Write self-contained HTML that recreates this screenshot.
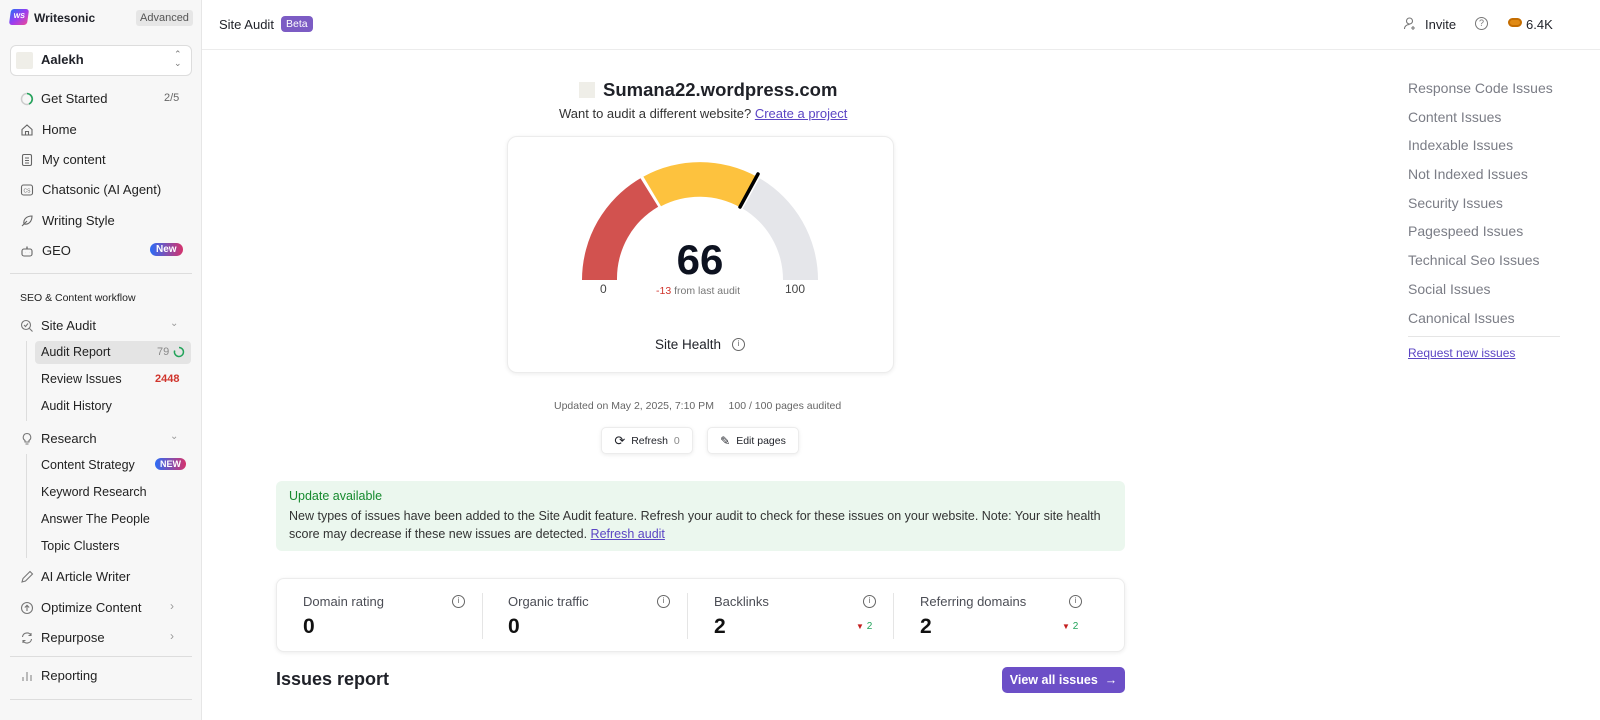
<!DOCTYPE html>
<html><head><meta charset="utf-8"><style>
*{box-sizing:border-box;margin:0;padding:0}
body{width:1600px;height:720px;overflow:hidden;font-family:"Liberation Sans",sans-serif;background:#fff;color:#1f2128;position:relative}
.a{position:absolute;white-space:nowrap}
#sb{position:absolute;left:0;top:0;width:202px;height:720px;background:#f7f7f7;border-right:1px solid #e6e6e6}
.ni{position:absolute;left:20px;font-size:13px;color:#222}
.ni svg{position:absolute;left:0;top:1px}
.ni span{position:absolute;left:21px;top:0;white-space:nowrap}
.sub{position:absolute;left:41px;font-size:12.5px;color:#222;white-space:nowrap}
.hr{position:absolute;left:10px;width:182px;height:1px;background:#ddd}
.ri{position:absolute;left:1408px;font-size:14px;color:#7b7d86;white-space:nowrap}
.card{position:absolute;background:#fff;border:1px solid #ececec;border-radius:8px;box-shadow:0 1px 4px rgba(0,0,0,.08)}
.btn{display:flex;align-items:center;justify-content:center;gap:6px;font-size:10.5px}
.st{position:absolute;top:0;width:206px;height:72px}
.st .l{position:absolute;left:26px;top:15px;font-size:13px;color:#4b4d55}
.st .v{position:absolute;left:26px;top:36px;font-size:21px;font-weight:bold;color:#111}
.st .i{position:absolute;right:18px;top:16px;width:13px;height:13px;border:1.3px solid #666;border-radius:50%;font-size:8px;text-align:center;line-height:10px;color:#666}
</style></head><body>
<div id="sb">
 <div class="a" style="left:10px;top:9px;width:18px;height:16px;background:linear-gradient(135deg,#2b6cf6,#9a3cf0,#e94a9a);border-radius:3px;transform:skewX(-8deg);color:#fff;font-size:7px;font-weight:bold;text-align:center;line-height:16px">WS</div>
 <div class="a" style="left:34px;top:11px;font-size:12px;font-weight:bold">Writesonic</div>
 <div class="a" style="left:136px;top:10px;background:#e6e6e6;border-radius:3px;padding:2px 4px;font-size:11px;color:#555">Advanced</div>
 <div class="a" style="left:10px;top:45px;width:182px;height:31px;background:#fff;border:1px solid #ddd;border-radius:6px"></div>
 <div class="a" style="left:16px;top:52px;width:17px;height:17px;background:#efeee8;border-radius:2px"></div>
 <div class="a" style="left:41px;top:52px;font-size:13px;font-weight:bold">Aalekh</div>
 <div class="a" style="left:174px;top:50px;font-size:9px;color:#777;line-height:9px">⌃<br>⌄</div>
 <div class="ni" style="top:91px"><svg width="14" height="14"><circle cx="7" cy="7" r="5.5" fill="none" stroke="#ccc" stroke-width="1.5"/><path d="M7 1.5A5.5 5.5 0 0 1 9 12" fill="none" stroke="#22a35a" stroke-width="1.6"/></svg><span>Get Started</span></div>
 <div class="a" style="left:164px;top:92px;font-size:11px;color:#666">2/5</div>
 <div class="ni" style="top:122px"><svg width="14" height="14"><path d="M2 6.5L7 2l5 4.5V12H2z M5.5 12V8.5h3V12" fill="none" stroke="#666" stroke-width="1.1"/></svg><span style="left:22px">Home</span></div>
 <div class="ni" style="top:152px"><svg width="14" height="14"><rect x="2.5" y="1.5" width="9" height="11" rx="1.5" fill="none" stroke="#666" stroke-width="1.1"/><path d="M5 5h4M5 7.5h4M5 10h4" stroke="#666"/></svg><span style="left:22px">My content</span></div>
 <div class="ni" style="top:182px"><svg width="14" height="14"><rect x="1.5" y="2" width="11" height="10" rx="2" fill="none" stroke="#666" stroke-width="1.1"/><text x="3.5" y="9.5" font-size="5" fill="#666" font-family="Liberation Sans">CS</text></svg><span style="left:22px">Chatsonic (AI Agent)</span></div>
 <div class="ni" style="top:213px"><svg width="14" height="14"><path d="M2 12L7 7M4 10C3 5 7 2 12 2 12 7 9 11 4 10" fill="none" stroke="#666" stroke-width="1.1"/></svg><span style="left:22px">Writing Style</span></div>
 <div class="ni" style="top:243px"><svg width="14" height="14"><rect x="2" y="5" width="10" height="7" rx="2" fill="none" stroke="#666" stroke-width="1.1"/><path d="M7 5V2.5M5 8.5h.1M9 8.5h.1" stroke="#666" stroke-width="1.3"/></svg><span style="left:22px">GEO</span></div>
 <div class="a" style="left:150px;top:243px;background:linear-gradient(90deg,#2b6cf6,#d6336c);color:#fff;font-size:10px;font-weight:bold;border-radius:8px;padding:1px 6px">New</div>
 <div class="hr" style="top:273px"></div>
 <div class="a" style="left:20px;top:292px;font-size:10.5px;color:#222">SEO &amp; Content workflow</div>
 <div class="ni" style="top:318px"><svg width="14" height="14"><circle cx="6" cy="6" r="4.5" fill="none" stroke="#777" stroke-width="1.1"/><path d="M9.5 9.5L12.5 12.5M4 6l1.5 1.5L8 4.5" fill="none" stroke="#777" stroke-width="1.1"/></svg><span>Site Audit</span></div>
 <div class="a" style="left:170px;top:318px;font-size:10px;color:#999">⌄</div>
 <div class="a" style="left:26px;top:341px;width:1px;height:80px;background:#ddd"></div>
 <div class="a" style="left:35px;top:341px;width:156px;height:23px;background:#e4e4e4;border-radius:4px"></div>
 <div class="sub" style="top:345px">Audit Report</div>
 <div class="a" style="left:157px;top:346px;font-size:11px;color:#888">79</div>
 <svg class="a" style="left:173px;top:346px" width="12" height="12"><path d="M6 1.5A4.5 4.5 0 1 1 1.7 4.5" fill="none" stroke="#22a35a" stroke-width="1.5"/></svg>
 <div class="sub" style="top:372px">Review Issues</div>
 <div class="a" style="left:155px;top:373px;font-size:11px;color:#d0342c;font-weight:bold">2448</div>
 <div class="sub" style="top:399px">Audit History</div>
 <div class="ni" style="top:431px"><svg width="14" height="14"><path d="M7 1.5a3.8 3.8 0 0 0-2 7V10h4V8.5a3.8 3.8 0 0 0-2-7zM5.5 12h3" fill="none" stroke="#777" stroke-width="1.1"/></svg><span>Research</span></div>
 <div class="a" style="left:170px;top:431px;font-size:10px;color:#999">⌄</div>
 <div class="a" style="left:26px;top:454px;width:1px;height:104px;background:#ddd"></div>
 <div class="sub" style="top:458px">Content Strategy</div>
 <div class="a" style="left:155px;top:458px;background:linear-gradient(90deg,#2b6cf6,#d6336c);color:#fff;font-size:9px;font-weight:bold;border-radius:7px;padding:1px 5px">NEW</div>
 <div class="sub" style="top:485px">Keyword Research</div>
 <div class="sub" style="top:512px">Answer The People</div>
 <div class="sub" style="top:539px">Topic Clusters</div>
 <div class="ni" style="top:569px"><svg width="14" height="14"><path d="M2 12l1-3.5L10 1.5l2.5 2.5L5.5 11z" fill="none" stroke="#777" stroke-width="1.1"/></svg><span>AI Article Writer</span></div>
 <div class="ni" style="top:600px"><svg width="14" height="14"><circle cx="7" cy="7" r="5.5" fill="none" stroke="#777" stroke-width="1.1"/><path d="M7 10V4.5M4.8 6.5L7 4.3l2.2 2.2" fill="none" stroke="#777" stroke-width="1.1"/></svg><span>Optimize Content</span></div>
 <div class="a" style="left:170px;top:599px;font-size:12px;color:#999">›</div>
 <div class="ni" style="top:630px"><svg width="14" height="14"><path d="M2.5 6a4.5 4.5 0 0 1 8.5-1.5M11.5 8a4.5 4.5 0 0 1-8.5 1.5M11 2v2.5H8.5M3 12V9.5h2.5" fill="none" stroke="#777" stroke-width="1.1"/></svg><span>Repurpose</span></div>
 <div class="a" style="left:170px;top:629px;font-size:12px;color:#999">›</div>
 <div class="hr" style="top:656px"></div>
 <div class="ni" style="top:668px"><svg width="14" height="14"><path d="M3 12V8M7 12V3M11 12V6" stroke="#888" stroke-width="1.1"/></svg><span>Reporting</span></div>
 <div class="hr" style="top:699px"></div>
</div>
<!-- header -->
<div class="a" style="left:202px;top:49px;width:1398px;height:1px;background:#ececec"></div>
<div class="a" style="left:219px;top:17px;font-size:13px">Site Audit</div>
<div class="a" style="left:281px;top:16px;background:#7c5cc4;color:#fff;font-size:10.5px;border-radius:4px;padding:2px 5px">Beta</div>
<svg class="a" style="left:1403px;top:16px" width="15" height="15"><circle cx="6.5" cy="5" r="3" fill="none" stroke="#777" stroke-width="1.1"/><path d="M1.5 13c0-3 2.5-4.5 5-4.5M10 10v4M8 12h4" fill="none" stroke="#777" stroke-width="1.1"/></svg>
<div class="a" style="left:1425px;top:17px;font-size:13px">Invite</div>
<div class="a" style="left:1475px;top:17px;width:13px;height:13px;border:1.2px solid #777;border-radius:50%;font-size:9px;color:#777;text-align:center;line-height:11px">?</div>
<div class="a" style="left:1508px;top:18px;width:14px;height:9px;background:#e08a14;border-radius:5px;border:2px solid #c46d00"></div>
<div class="a" style="left:1526px;top:17px;font-size:13px">6.4K</div>
<!-- title -->
<div class="a" style="left:579px;top:82px;width:16px;height:16px;background:#efeee8"></div>
<div class="a" style="left:603px;top:79px;font-size:18.5px;font-weight:bold">Sumana22.wordpress.com</div>
<div class="a" style="left:559px;top:106px;font-size:13px;color:#333">Want to audit a different website? <span style="color:#5b45c4;text-decoration:underline">Create a project</span></div>
<div class="card" style="left:507px;top:136px;width:387px;height:237px;border-radius:10px"></div>
<svg class="a" style="left:560px;top:150px" width="280" height="140" viewBox="560 150 280 140">
 <path d="M582 280A118 118 0 0 1 640.5 178.2L658.2 206.7A83 83 0 0 0 617 280Z" fill="#d2524f"/>
 <path d="M643.4 176.6A118 118 0 0 1 757.1 176.8L740.3 207.4A83 83 0 0 0 661 206.2Z" fill="#fdc23e"/>
 <path d="M759.6 178.2A118 118 0 0 1 818 280H783A83 83 0 0 0 742.8 208.6Z" fill="#e5e6ea"/>
 <path d="M740 207L758 174" stroke="#000" stroke-width="3.5" stroke-linecap="round"/>
</svg>
<div class="a" style="left:640px;top:236px;width:120px;text-align:center;font-size:42px;font-weight:bold;color:#0d1220">66</div>
<div class="a" style="left:600px;top:282px;font-size:12px;color:#444">0</div>
<div class="a" style="left:785px;top:282px;font-size:12px;color:#444">100</div>
<div class="a" style="left:656px;top:285px;font-size:10.5px;color:#777"><span style="color:#d0342c">-13</span> from last audit</div>
<div class="a" style="left:655px;top:337px;font-size:13.5px">Site Health</div>
<div class="a" style="left:732px;top:338px;width:13px;height:13px;border:1.2px solid #666;border-radius:50%;font-size:8px;color:#666;text-align:center;line-height:10px">i</div>
<div class="a" style="left:554px;top:400px;font-size:10.5px;color:#666">Updated on May 2, 2025, 7:10 PM &nbsp;&nbsp;&nbsp;&nbsp;100 / 100 pages audited</div>
<div class="card btn" style="left:601px;top:427px;width:92px;height:27px;border-radius:5px"><span style="font-size:13px">⟳</span><span>Refresh &nbsp;<span style="color:#888">0</span></span></div>
<div class="card btn" style="left:707px;top:427px;width:92px;height:27px;border-radius:5px"><span style="font-size:12px">✎</span><span>Edit pages</span></div>
<div class="a" style="left:276px;top:481px;width:849px;height:70px;background:#ebf7ee;border-radius:6px"></div>
<div class="a" style="left:289px;top:489px;font-size:12.5px;color:#168a2e">Update available</div>
<div class="a" style="left:289px;top:507px;font-size:12.5px;line-height:18px;color:#333;white-space:normal;width:830px">New types of issues have been added to the Site Audit feature. Refresh your audit to check for these issues on your website. Note: Your site health score may decrease if these new issues are detected. <span style="color:#5b45c4;text-decoration:underline">Refresh audit</span></div>
<div class="card" style="left:276px;top:578px;width:849px;height:74px">
 <div class="st" style="left:0"><div class="l">Domain rating</div><div class="v">0</div><div class="i">i</div></div>
 <div class="a" style="left:205px;top:14px;width:1px;height:46px;background:#e5e5e5"></div>
 <div class="st" style="left:205px"><div class="l">Organic traffic</div><div class="v">0</div><div class="i">i</div></div>
 <div class="a" style="left:410px;top:14px;width:1px;height:46px;background:#e5e5e5"></div>
 <div class="st" style="left:411px"><div class="l">Backlinks</div><div class="v">2</div><div class="i">i</div><div class="a" style="left:168px;top:42px;font-size:10px"><span style="color:#c41e1e;font-size:8px">▼</span> <span style="color:#22a35a">2</span></div></div>
 <div class="a" style="left:616px;top:14px;width:1px;height:46px;background:#e5e5e5"></div>
 <div class="st" style="left:617px"><div class="l">Referring domains</div><div class="v">2</div><div class="i">i</div><div class="a" style="left:168px;top:42px;font-size:10px"><span style="color:#c41e1e;font-size:8px">▼</span> <span style="color:#22a35a">2</span></div></div>
</div>
<div class="a" style="left:276px;top:669px;font-size:18px;font-weight:bold">Issues report</div>
<div class="a" style="left:1002px;top:667px;width:123px;height:26px;background:#6c4fc7;border-radius:5px;color:#fff;font-size:12.5px;line-height:26px;text-align:center;font-weight:bold">View all issues &nbsp;→</div>
<!-- right nav -->
<div class="ri" style="top:80px">Response Code Issues</div>
<div class="ri" style="top:109px">Content Issues</div>
<div class="ri" style="top:137px">Indexable Issues</div>
<div class="ri" style="top:166px">Not Indexed Issues</div>
<div class="ri" style="top:195px">Security Issues</div>
<div class="ri" style="top:223px">Pagespeed Issues</div>
<div class="ri" style="top:252px">Technical Seo Issues</div>
<div class="ri" style="top:281px">Social Issues</div>
<div class="ri" style="top:310px">Canonical Issues</div>
<div class="a" style="left:1408px;top:336px;width:152px;height:1px;background:#e5e5e5"></div>
<div class="a" style="left:1408px;top:346px;font-size:12px;color:#5b45c4;text-decoration:underline">Request new issues</div>
</body></html>
